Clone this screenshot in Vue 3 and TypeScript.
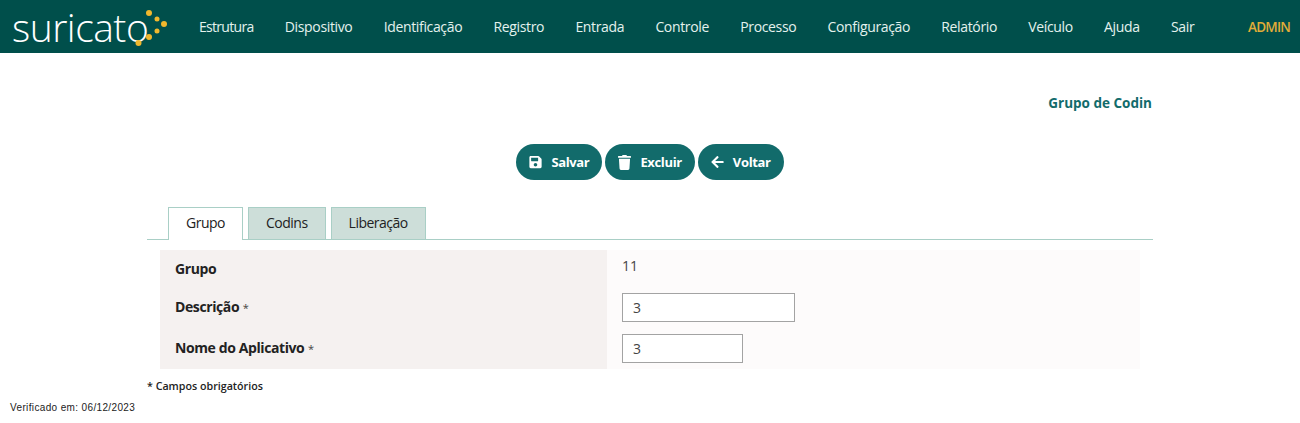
<script setup lang="ts">
const menu = ['Estrutura', 'Dispositivo', 'Identificação', 'Registro', 'Entrada', 'Controle', 'Processo', 'Configuração', 'Relatório', 'Veículo', 'Ajuda', 'Sair']
const tabs = ['Grupo', 'Codins', 'Liberação']
</script>

<template>
  <header class="topbar">
    <div class="logo">
      <span>suricato</span>
      <svg class="dots" width="36" height="36" viewBox="0 0 36 36">
        <circle cx="12" cy="4" r="3" />
        <circle cx="20" cy="10" r="2.500" />
        <circle cx="27" cy="15" r="3" />
        <circle cx="20" cy="22" r="2.500" />
        <circle cx="12" cy="28" r="3" />
        <circle cx="1.500" cy="34" r="3" />
      </svg>
    </div>
    <nav class="menu">
      <a v-for="item in menu" :key="item">{{ item }}</a>
    </nav>
    <span class="user">ADMIN</span>
  </header>

  <main class="page">
    <h1 class="title">Grupo de Codin</h1>

    <div class="actions">
      <button class="btn">
        <svg width="13" height="14" viewBox="0 0 448 512"><path fill="currentColor" d="M433.900 129.900l-83.900-83.900A48 48 0 0 0 316.100 32H48C21.500 32 0 53.500 0 80v352c0 26.500 21.500 48 48 48h352c26.500 0 48-21.500 48-48V163.900a48 48 0 0 0-14.100-34zM224 416c-35.300 0-64-28.700-64-64 0-35.300 28.700-64 64-64s64 28.700 64 64c0 35.300-28.700 64-64 64zm96-304.500V212c0 6.600-5.400 12-12 12H76c-6.600 0-12-5.400-12-12V108c0-6.600 5.400-12 12-12h228.500c3.200 0 6.200 1.300 8.500 3.500l3.500 3.500c2.200 2.200 3.500 5.300 3.500 8.500z" /></svg>
        Salvar
      </button>
      <button class="btn">
        <svg width="13" height="15" viewBox="0 0 448 512"><path fill="currentColor" d="M432 32H312l-9.400-18.700A24 24 0 0 0 281.100 0H166.800a23.700 23.700 0 0 0-21.400 13.300L136 32H16A16 16 0 0 0 0 48v32a16 16 0 0 0 16 16h416a16 16 0 0 0 16-16V48a16 16 0 0 0-16-16zM53.200 467a48 48 0 0 0 47.900 45h245.800a48 48 0 0 0 47.900-45L416 128H32z" /></svg>
        Excluir
      </button>
      <button class="btn">
        <svg width="13" height="14" viewBox="0 0 448 512"><path fill="currentColor" d="M257.500 445.100l-22.200 22.200c-9.400 9.400-24.600 9.400-33.900 0L7 273c-9.400-9.400-9.400-24.600 0-33.900L201.400 44.700c9.400-9.400 24.600-9.400 33.900 0l22.200 22.200c9.500 9.500 9.300 25-.4 34.300L136.600 216H424c13.300 0 24 10.700 24 24v32c0 13.300-10.700 24-24 24H136.600l120.500 114.800c9.800 9.300 10 24.800.4 34.300z" /></svg>
        Voltar
      </button>
    </div>

    <div class="tabs">
      <div v-for="(tab, i) in tabs" :key="tab" class="tab" :class="{ active: i === 0 }">{{ tab }}</div>
    </div>

    <section class="form">
      <div class="row row-first">
        <div class="label"><b>Grupo</b></div>
        <div class="value">11</div>
      </div>
      <div class="row">
        <div class="label"><b>Descrição</b> <span class="req">*</span></div>
        <div class="value"><input class="field wide" value="3" /></div>
      </div>
      <div class="row">
        <div class="label"><b>Nome do Aplicativo</b> <span class="req">*</span></div>
        <div class="value"><input class="field narrow" value="3" /></div>
      </div>
    </section>

    <p class="note">* Campos obrigatórios</p>
  </main>

  <footer class="verified">Verificado em: 06/12/2023</footer>
</template>

<style scoped>
.topbar {
  display: flex;
  align-items: center;
  height: 53px;
  background: #004f4b;
  font-family: "Open Sans", sans-serif;
}
.logo {
  display: flex;
  align-items: center;
  width: 199px;
  padding-left: 12px;
  box-sizing: border-box;
  color: #fff;
  font-size: 39px;
  font-weight: 300;
  line-height: 53px;
  letter-spacing: -0.5px;
}
.dots {
  margin-left: -11px;
  overflow: visible;
  fill: #f1b82d;
}
.menu {
  display: flex;
  gap: 31.250px;
  flex: 1;
}
.menu a {
  color: #e4f2ee;
  font-size: 14px;
  letter-spacing: -0.35px;
}
.menu a:first-child {
  letter-spacing: -0.7px;
}
.user {
  padding-right: 10px;
  color: #e2ad38;
  font-size: 13.500px;
  font-weight: 600;
  letter-spacing: -0.8px;
}
.page {
  width: 1006px;
  margin-left: 147px;
  font-family: "Open Sans", sans-serif;
  color: #222;
}
.title {
  margin: 41px 1px 0 0;
  color: #126b6b;
  font-size: 13.500px;
  font-weight: 700;
  line-height: 18px;
  text-align: right;
}
.actions {
  display: flex;
  justify-content: center;
  gap: 3px;
  margin-top: 32px;
}
.btn {
  display: flex;
  align-items: center;
  gap: 9px;
  height: 36px;
  padding: 0 13px;
  border: 0;
  border-radius: 18px;
  background: #126b6b;
  color: #fff;
  font-family: inherit;
  font-size: 13px;
  font-weight: 700;
  letter-spacing: -0.35px;
}
.tabs {
  display: flex;
  gap: 5px;
  height: 32px;
  margin-top: 27px;
  padding-left: 21px;
  border-bottom: 1px solid #a9cfc6;
}
.tab {
  height: 32px;
  box-sizing: border-box;
  padding: 0 17px;
  border: 1px solid #a9cfc6;
  border-bottom: 0;
  background: #cdded9;
  font-size: 14px;
  line-height: 30px;
  letter-spacing: -0.5px;
}
.tab.active {
  height: 33px;
  background: #fff;
}
.form {
  margin: 10px 13px 0;
  background: #fdfbfb;
}
.row {
  display: flex;
  height: 41px;
}
.row-first {
  height: 37px;
}
.label {
  width: 447px;
  box-sizing: border-box;
  padding-left: 15px;
  background: #f5f1f0;
  font-size: 14px;
  line-height: 39px;
}
.label b {
  font-weight: 700;
  letter-spacing: -0.4px;
}
.req {
  color: #444;
  font-size: 11px;
}
.row-first .label {
  line-height: 38px;
}
.value {
  display: flex;
  align-items: center;
  padding-left: 15px;
  font-size: 14px;
  color: #444;
}
.row-first .value {
  align-items: flex-start;
  padding-top: 6px;
}
.field {
  box-sizing: border-box;
  height: 29px;
  padding: 0 10px;
  border: 1px solid #a3a3a3;
  background: #fff;
  color: #444;
  font-family: inherit;
  font-size: 14px;
}
.wide {
  width: 173px;
}
.narrow {
  width: 121px;
}
.note {
  margin: 10px 0 0;
  font-size: 10.700px;
  font-weight: 600;
  line-height: 14px;
}
.verified {
  margin: 9px 0 0 10px;
  color: #222;
  font-family: "Liberation Sans", Arial, sans-serif;
  font-size: 10px;
  line-height: 12px;
  letter-spacing: 0.36px;
}
</style>
